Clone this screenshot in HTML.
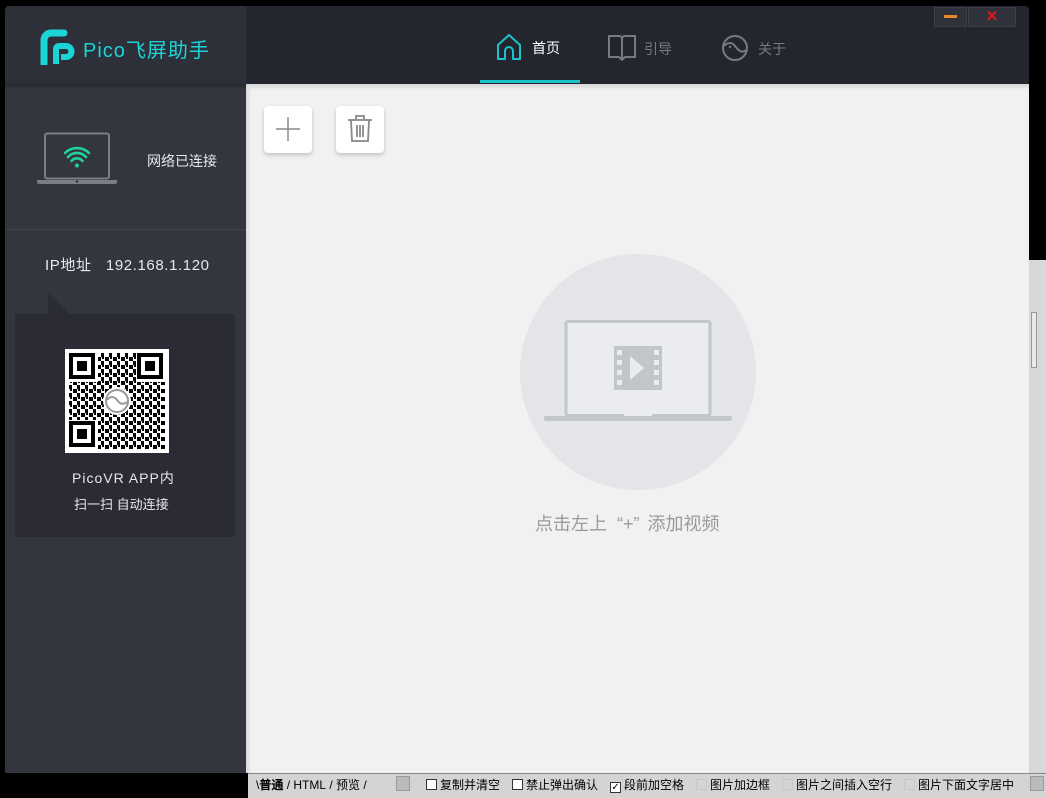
<!DOCTYPE html><html><head><meta charset="utf-8"><style>
*{margin:0;padding:0;box-sizing:border-box}
body{width:1046px;height:798px;background:#000;position:relative;overflow:hidden;font-family:"Liberation Sans","Noto Sans CJK SC",sans-serif}
.abs{position:absolute}
.tb{position:absolute;top:776px;font-size:12px;color:#000;white-space:nowrap;font-family:'Liberation Sans','WenQuanYi Zen Hei',sans-serif}
.cb{display:inline-block;width:11px;height:11px;border:1px solid #333;background:#fff;vertical-align:-1px;margin-right:3px;font-size:10px;line-height:9px;text-align:center}
.cb.g{border-color:#c8c8c8;background:#d4d4d4}
</style></head><body>
<div class="abs" style="left:1029px;top:260px;width:17px;height:538px;background:#d8d8d8"></div>
<div class="abs" style="left:1031px;top:312px;width:6px;height:56px;border:1px solid #999;background:#e8e8e8"></div>
<div class="abs" style="left:5px;top:6px;width:1024px;height:78px;background:#24262f;border-radius:4px 4px 0 0"></div>
<div class="abs" style="left:5px;top:6px;width:241px;height:78px;background:#2e3039;border-radius:4px 0 0 0"></div>
<svg class="abs" style="left:40px;top:29px" width="38" height="36" viewBox="0 0 38 36"><path d="M4 35V11a7 7 0 0 1 7-7h13" stroke="#1bd4d8" stroke-width="7" fill="none" stroke-linecap="round"/><path d="M16 35V20a3 3 0 0 1 3-3h7a5.5 5.5 0 0 1 0 11h-5" stroke="#1bd4d8" stroke-width="6" fill="none"/></svg>
<div class="abs" style="left:83px;top:34px;color:#1bd4d8;font-size:20px;letter-spacing:1px">Pico飞屏助手</div>
<svg class="abs" style="left:495px;top:33px" width="28" height="28" viewBox="0 0 28 28"><path d="M3 26V12L14 2l11 10v14h-7v-8a4 4 0 0 0-8 0v8z" stroke="#1bc4c8" stroke-width="2" fill="none" stroke-linejoin="round"/></svg>
<div class="abs" style="left:532px;top:38px;color:#fff;font-size:14px">首页</div>
<div class="abs" style="left:480px;top:80px;width:100px;height:3px;background:#1bc4c8"></div>
<svg class="abs" style="left:607px;top:33px" width="30" height="28" viewBox="0 0 30 28"><path d="M2 3h10a3 3 0 0 1 3 3 3 3 0 0 1 3-3h10v21H18l-3 3-3-3H2z M15 6v21" stroke="#777a82" stroke-width="2" fill="none"/></svg>
<div class="abs" style="left:644px;top:39px;color:#777a82;font-size:14px">引导</div>
<svg class="abs" style="left:721px;top:34px" width="28" height="28" viewBox="0 0 28 28"><circle cx="14" cy="14" r="12" stroke="#777a82" stroke-width="2" fill="none"/><path d="M3 12c4-4 8-4 11 0s7 8 11 4" stroke="#777a82" stroke-width="2" fill="none"/><circle cx="9" cy="13" r="1.2" fill="#777a82"/></svg>
<div class="abs" style="left:758px;top:39px;color:#777a82;font-size:14px">关于</div>
<div class="abs" style="left:934px;top:7px;width:33px;height:20px;background:#2f323b;border:1px solid #3c3f48"></div>
<div class="abs" style="left:944px;top:15px;width:13px;height:3px;background:#e08a2c"></div>
<div class="abs" style="left:968px;top:7px;width:48px;height:20px;background:#2f323b;border:1px solid #3c3f48;color:#e3181e;font-size:15px;text-align:center;line-height:17px;font-weight:bold">✕</div>
<div class="abs" style="left:5px;top:84px;width:241px;height:689px;background:#33353f"></div>
<div class="abs" style="left:5px;top:84px;width:241px;height:4px;background:linear-gradient(#24262f,#33353f)"></div>
<div class="abs" style="left:5px;top:229px;width:241px;height:1px;background:#41434d"></div>
<svg class="abs" style="left:36px;top:132px" width="82" height="54" viewBox="0 0 82 54"><rect x="9" y="1.5" width="64" height="45" rx="2" stroke="#7b7e86" stroke-width="2" fill="none"/><path d="M1 48h80v2a2 2 0 0 1-2 2H3a2 2 0 0 1-2-2z" fill="#7b7e86"/><circle cx="41" cy="49.5" r="1.3" fill="#33353f"/><path d="M29 21a17 17 0 0 1 24 0M32 25a12 12 0 0 1 18 0M35.5 29a7 7 0 0 1 11 0" stroke="#1ed29a" stroke-width="2.6" fill="none" stroke-linecap="round"/><circle cx="41" cy="33.5" r="2" fill="#1ed29a"/></svg>
<div class="abs" style="left:147px;top:151px;color:#e8e8e8;font-size:14px">网络已连接</div>
<div class="abs" style="left:45px;top:254px;color:#e8e8e8;font-size:15px;letter-spacing:0.6px">IP地址&nbsp;&nbsp;&nbsp;192.168.1.120</div>
<div class="abs" style="left:15px;top:314px;width:220px;height:223px;background:#2a2b34"></div>
<div class="abs" style="left:48px;top:293px;width:0;height:0;border-left:22px solid #2a2b34;border-top:21px solid transparent"></div>
<svg class="abs" style="left:65px;top:349px" width="104" height="104" viewBox="0 0 104 104"><rect width="104" height="104" fill="#fff"/><defs><pattern id="q" width="8" height="8" patternUnits="userSpaceOnUse"><rect x="0" y="0" width="4" height="4" fill="#000"/><rect x="4" y="4" width="3" height="4" fill="#000"/><rect x="5" y="0" width="2" height="2" fill="#000"/></pattern></defs><rect x="4" y="4" width="96" height="96" fill="url(#q)"/><g fill="#fff"><rect x="3" y="3" width="30" height="30"/><rect x="71" y="3" width="30" height="30"/><rect x="3" y="71" width="30" height="30"/></g><g fill="none" stroke="#000" stroke-width="4"><rect x="6" y="6" width="22" height="22"/><rect x="74" y="6" width="22" height="22"/><rect x="6" y="74" width="22" height="22"/></g><g fill="#000"><rect x="12" y="12" width="10" height="10"/><rect x="80" y="12" width="10" height="10"/><rect x="12" y="80" width="10" height="10"/></g><circle cx="52" cy="52" r="14" fill="#fff"/><circle cx="52" cy="52" r="11" stroke="#999" stroke-width="2" fill="none"/><path d="M42 51c3-4 7-4 10 0s6 5 10 2" stroke="#999" stroke-width="2" fill="none"/></svg>
<div class="abs" style="left:72px;top:468px;color:#e8e8e8;font-size:14px;letter-spacing:1px">PicoVR APP内</div>
<div class="abs" style="left:74px;top:494px;color:#e8e8e8;font-size:13px">扫一扫 自动连接</div>
<div class="abs" style="left:246px;top:84px;width:783px;height:689px;background:#f1f1f1;box-shadow:inset 2px 3px 4px rgba(0,0,0,.12)"></div>
<div class="abs" style="left:264px;top:106px;width:48px;height:47px;background:#fff;border-radius:4px;box-shadow:0 2px 4px rgba(0,0,0,.2)"></div>
<svg class="abs" style="left:276px;top:117px" width="24" height="24"><path d="M12 0v24M0 12h24" stroke="#888" stroke-width="1.5"/></svg>
<div class="abs" style="left:336px;top:106px;width:48px;height:47px;background:#fff;border-radius:4px;box-shadow:0 2px 4px rgba(0,0,0,.2)"></div>
<svg class="abs" style="left:347px;top:115px" width="26" height="28" viewBox="0 0 26 28"><path d="M1 5h24M9 5V1h8v4M4 5l1 21h16l1-21M10 10v12M13 10v12M16 10v12" stroke="#888" stroke-width="1.8" fill="none"/></svg>
<div class="abs" style="left:520px;top:254px;width:236px;height:236px;border-radius:50%;background:#e3e5e8"></div>
<svg class="abs" style="left:544px;top:320px" width="188" height="106" viewBox="0 0 188 106"><rect x="22" y="1.5" width="144" height="94" rx="2" fill="#eaecef" stroke="#c2c5ca" stroke-width="3"/><rect x="0" y="96" width="188" height="5" rx="2" fill="#c2c5ca"/><rect x="80" y="93" width="28" height="3" fill="#eaecef"/><rect x="70" y="26" width="48" height="44" fill="#c2c5ca"/><g fill="#eaecef"><rect x="73" y="30" width="5" height="5"/><rect x="73" y="40" width="5" height="5"/><rect x="73" y="50" width="5" height="5"/><rect x="73" y="60" width="5" height="5"/><rect x="110" y="30" width="5" height="5"/><rect x="110" y="40" width="5" height="5"/><rect x="110" y="50" width="5" height="5"/><rect x="110" y="60" width="5" height="5"/><path d="M86 36l14 12-14 12z"/></g></svg>
<div class="abs" style="left:535px;top:510px;color:#9a9a9a;font-size:18px;white-space:nowrap">点击左上<span style="margin-left:10px">“</span>+<span style="margin-right:8px">”</span>添加视频</div>
<div class="abs" style="left:248px;top:773px;width:798px;height:25px;background:#d4d4d4;border-top:1px solid #888"></div>
<div class="tb" style="left:256px">\<b>普通</b>&nbsp;/&nbsp;HTML&nbsp;/&nbsp;预览&nbsp;/</div>
<div class="abs" style="left:396px;top:776px;width:14px;height:15px;background:#bbb;border:1px solid #999"></div>
<div class="tb" style="left:426px"><span class="cb"></span>复制并清空</div>
<div class="tb" style="left:512px"><span class="cb"></span>禁止弹出确认</div>
<div class="tb" style="left:610px"><span class="cb">✓</span>段前加空格</div>
<div class="tb" style="left:696px"><span class="cb g"></span>图片加边框</div>
<div class="tb" style="left:782px"><span class="cb g"></span>图片之间插入空行</div>
<div class="tb" style="left:904px"><span class="cb g"></span>图片下面文字居中</div>
<div class="abs" style="left:1030px;top:776px;width:14px;height:15px;background:#bbb;border:1px solid #999"></div>
</body></html>
